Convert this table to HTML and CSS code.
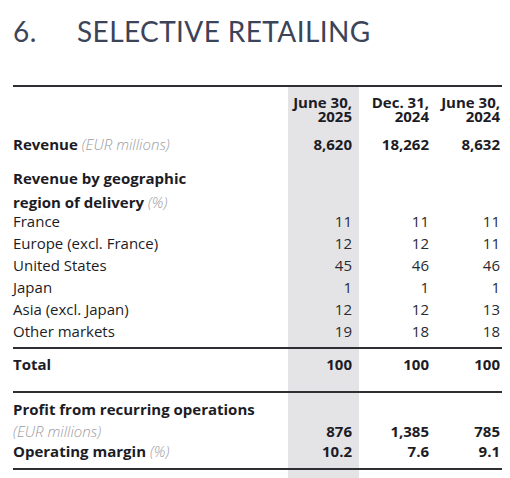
FILE: index.html
```html
<!doctype html>
<html lang="en">
<head>
<meta charset="utf-8">
<meta name="viewport" content="width=device-width, initial-scale=1">
<title>Selective Retailing</title>
<link rel="stylesheet" href="styles.css">
</head>
<body>
<div class="page">
  <h1 class="title"><span class="num">6.</span>SELECTIVE RETAILING</h1>

  <table class="figures">
    <colgroup>
      <col class="c-label"><col class="c-cur"><col class="c-mid"><col class="c-last">
    </colgroup>
    <thead>
      <tr class="head">
        <th></th>
        <th class="cur">June 30,<br>2025</th>
        <th>Dec. 31,<br>2024</th>
        <th>June 30,<br>2024</th>
      </tr>
    </thead>
    <tbody>
      <tr class="strong">
        <td>Revenue <em>(EUR millions)</em></td>
        <td class="cur">8,620</td><td>18,262</td><td>8,632</td>
      </tr>
      <tr class="strong group">
        <td><div class="two-line">Revenue by geographic<br>region of delivery <em>(%)</em></div></td>
        <td class="cur"></td><td></td><td></td>
      </tr>
      <tr><td>France</td><td class="cur">11</td><td>11</td><td>11</td></tr>
      <tr><td>Europe (excl. France)</td><td class="cur">12</td><td>12</td><td>11</td></tr>
      <tr><td>United States</td><td class="cur">45</td><td>46</td><td>46</td></tr>
      <tr><td>Japan</td><td class="cur">1</td><td>1</td><td>1</td></tr>
      <tr><td>Asia (excl. Japan)</td><td class="cur">12</td><td>12</td><td>13</td></tr>
      <tr class="last"><td>Other markets</td><td class="cur">19</td><td>18</td><td>18</td></tr>
      <tr class="strong total"><td>Total</td><td class="cur">100</td><td>100</td><td>100</td></tr>
      <tr class="strong sub"><td>Profit from recurring operations</td><td class="cur"></td><td></td><td></td></tr>
      <tr class="strong unit"><td><em>(EUR millions)</em></td><td class="cur">876</td><td>1,385</td><td>785</td></tr>
      <tr class="strong end"><td>Operating margin <em>(%)</em></td><td class="cur">10.2</td><td>7.6</td><td>9.1</td></tr>
      <tr class="tail"><td></td><td class="cur"></td><td></td><td></td></tr>
    </tbody>
  </table>
</div>
</body>
</html>
```

FILE: styles.css
```css
:root{--ink:#1c1c26;--num:#2a2a30;--title:#3b4459;--muted:#9c9ca2;--shade:#e4e4e6;--rule:#2e2e33;}
html,body{margin:0;padding:0;background:#fff;color:var(--ink);font-family:"Open Sans","Noto Sans",sans-serif;}

.page{padding:0 8px 0 13px;}

/* Section heading */
.title{
  margin:0;
  padding-top:13px;
  font-family:Lato,sans-serif;
  font-size:28px;
  font-weight:400;
  line-height:36px;
  color:var(--title);
  letter-spacing:0.4px;
}
.title .num{display:inline-block;width:64px;}

/* Figures table */
.figures{
  width:489px;
  table-layout:fixed;
  border-collapse:collapse;
  margin-top:36px;
  border-top:2px solid var(--rule);
  font-size:15px;
  line-height:22px;
}
.c-label{width:275px;}
.c-cur{width:71px;}
.c-mid{width:77px;}
.c-last{width:66px;}

.figures th,.figures td{padding:0 7px 0 0;text-align:right;vertical-align:top;color:var(--num);}
.figures td:first-child,.figures th:first-child{text-align:left;padding-right:0;color:var(--ink);}
.figures td:last-child,.figures th:last-child{padding-right:2px;}
.figures .cur{background:var(--shade);}

.figures em{font-style:italic;font-weight:300;color:var(--muted);}

.head th{font-weight:700;line-height:14px;padding-top:8px;padding-bottom:10px;color:var(--ink);}

.strong td{font-weight:700;color:var(--ink);}
.group td{padding-top:11px;}
.two-line{line-height:24px;margin-bottom:-4px;}

.last td{padding-bottom:5px;border-bottom:2px solid var(--rule);}
.total td{padding-top:4px;padding-bottom:16px;border-bottom:2px solid var(--rule);}
.sub td{padding-top:5px;}
.unit td,.end td{line-height:20px;}
.unit td{padding-top:1px;}
.end td{padding-bottom:7px;border-bottom:2px solid var(--rule);}
.tail td{height:10px;}
```
